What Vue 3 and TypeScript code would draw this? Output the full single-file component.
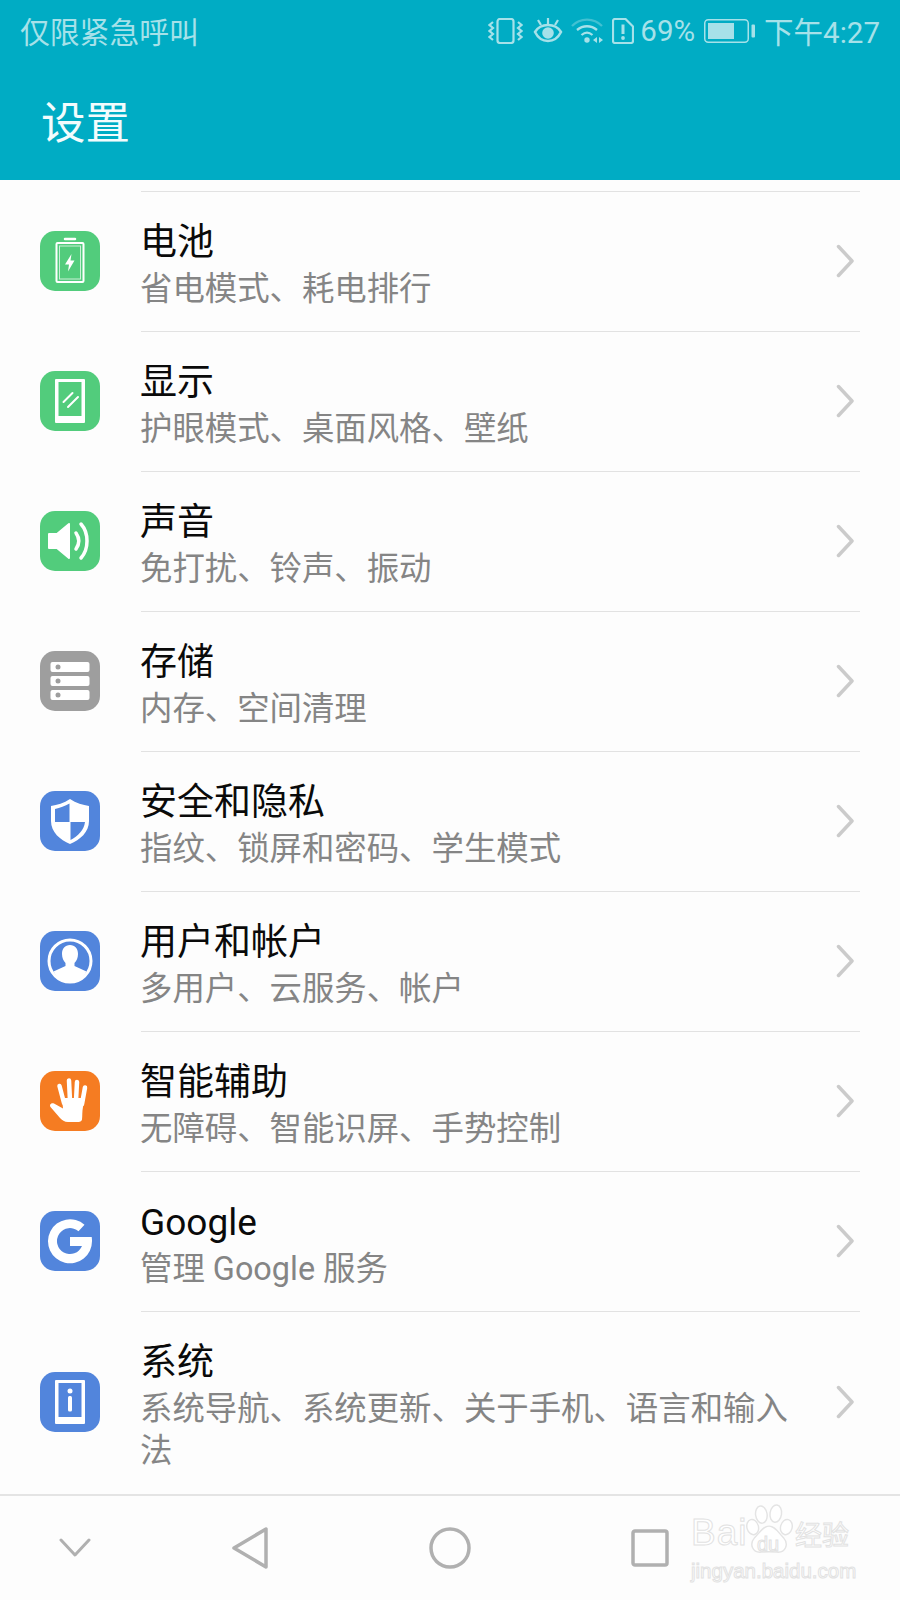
<script setup lang="ts">
type Row = { title: string; sub: string; icon: string; color: string }

const rows: Row[] = [
  { title: '电池', sub: '省电模式、耗电排行', icon: 'battery', color: '#52cc7c' },
  { title: '显示', sub: '护眼模式、桌面风格、壁纸', icon: 'display', color: '#52cc7c' },
  { title: '声音', sub: '免打扰、铃声、振动', icon: 'sound', color: '#52cc7c' },
  { title: '存储', sub: '内存、空间清理', icon: 'storage', color: '#9e9e9e' },
  { title: '安全和隐私', sub: '指纹、锁屏和密码、学生模式', icon: 'shield', color: '#5285dc' },
  { title: '用户和帐户', sub: '多用户、云服务、帐户', icon: 'user', color: '#5285dc' },
  { title: '智能辅助', sub: '无障碍、智能识屏、手势控制', icon: 'hand', color: '#f57c22' },
  { title: 'Google', sub: '管理 Google 服务', icon: 'google', color: '#5285dc' },
  { title: '系统', sub: '系统导航、系统更新、关于手机、语言和输入法', icon: 'info', color: '#5285dc' },
]
</script>

<template>
  <main class="phone">
    <header class="top">
      <div class="status">
        <span class="carrier">仅限紧急呼叫</span>
        <div class="status-right">
          <svg class="gap-10" width="35" height="26" viewBox="0 0 35 26" fill="none" stroke="currentColor" stroke-width="2.200">
            <rect x="9.500" y="1" width="16" height="24" rx="2.500" />
            <path d="M5 4L1.500 7 5 10 1.500 13 5 16 1.500 19 5 22M30 4l3.500 3L30 10l3.500 3L30 16l3.500 3L30 22" />
          </svg>
          <svg class="gap-8" width="30" height="26" viewBox="0 0 30 26" fill="none" stroke="currentColor" stroke-width="2.500">
            <path d="M2 14c3-5 7.500-7 13-7s10 2 13 7c-3 6-7.500 9-13 9S5 20 2 14z" />
            <circle cx="15" cy="15" r="5.800" fill="currentColor" stroke="none" />
            <path d="M5 2l3 5M15 0v6M25 2l-3 5" stroke-width="2.200" />
          </svg>
          <svg class="gap-8" width="33" height="26" viewBox="0 0 33 26" fill="none" stroke="currentColor" stroke-width="2.300">
            <path d="M1 8c8-8.500 22-8.500 30 0" opacity="0.4" />
            <path d="M6 12c6-5 14-5 20 0M10.500 17c3.500-3 7.500-3 11 0" />
            <circle cx="16" cy="22" r="2.700" fill="currentColor" stroke="none" />
            <path d="M22 22l4-3v6zM28 19l4 3-4 3z" fill="currentColor" stroke="none" />
          </svg>
          <svg class="gap-6" width="22" height="26" viewBox="0 0 22 26" fill="none" stroke="currentColor" stroke-width="2.200">
            <path d="M3 1h10.500L21 8.500V23a2 2 0 0 1-2 2H3a2 2 0 0 1-2-2V3a2 2 0 0 1 2-2z" />
            <path d="M11 6.500v9.500" stroke-width="3" />
            <circle cx="11" cy="20" r="1.900" fill="currentColor" stroke="none" />
          </svg>
          <span class="pct">69%</span>
          <svg class="gap-9" width="51" height="24" viewBox="0 0 51 24" fill="none">
            <rect x="0.750" y="0.750" width="43.500" height="22.500" rx="3.500" stroke="currentColor" stroke-width="1.500" />
            <rect x="4" y="4" width="26" height="16" fill="currentColor" />
            <rect x="47.500" y="5.500" width="3.500" height="13" rx="1" fill="currentColor" />
          </svg>
          <span class="time">下午4:27</span>
        </div>
      </div>
      <h1 class="page-title">设置</h1>
    </header>

    <section class="list">
      <div class="top-rule"></div>
      <div v-for="row in rows" :key="row.title" class="row">
        <div class="icon" :style="{ background: row.color }">
          <svg width="60" height="60" viewBox="0 0 60 60">
            <g v-if="row.icon === 'battery'" fill="none" stroke="#fff">
              <path d="M25 8h10" stroke-width="2.500" stroke-linecap="round" />
              <rect x="16.500" y="12" width="27" height="39" rx="1" stroke-width="2" />
              <rect x="19.500" y="15" width="21" height="33" stroke-width="1" opacity="0.7" />
              <path d="M31.500 23l-6.500 10.500h4l-1 7 6.500-11h-4z" fill="#fff" stroke="none" />
            </g>
            <g v-else-if="row.icon === 'display'">
              <path fill-rule="evenodd" d="M16 8h28a1 1 0 0 1 1 1v42a1 1 0 0 1-1 1H16a1 1 0 0 1-1-1V9a1 1 0 0 1 1-1zm2.500 3v34h23V11z" fill="#fff" />
              <path d="M23.500 31l9-9M28 36l10-10" stroke="#fff" stroke-width="2" stroke-linecap="round" />
            </g>
            <g v-else-if="row.icon === 'sound'" fill="none" stroke="#fff" stroke-linecap="round">
              <path d="M9 23h8l12-10v34l-12-10H9z" fill="#fff" stroke="#fff" stroke-width="2" stroke-linejoin="round" />
              <path d="M36 22c3.500 5 3.500 11 0 16" stroke-width="3.500" />
              <path d="M41 13c8 9 8 25 0 34" stroke-width="3.500" />
            </g>
            <g v-else-if="row.icon === 'storage'">
              <rect x="10.500" y="11" width="39" height="10" rx="2" fill="#fff" />
              <rect x="10.500" y="25" width="39" height="10" rx="2" fill="#fff" />
              <rect x="10.500" y="39" width="39" height="10" rx="2" fill="#fff" />
              <circle cx="18" cy="16" r="2.500" fill="#9e9e9e" />
              <circle cx="18" cy="30" r="2.500" fill="#9e9e9e" />
              <circle cx="18" cy="44" r="2.500" fill="#9e9e9e" />
            </g>
            <g v-else-if="row.icon === 'shield'">
              <path d="M30 8c6 4 13 6 19 7v15c0 11-9 19-19 23-10-4-19-12-19-23V15c6-1 13-3 19-7z" fill="#fff" />
              <path d="M29.500 12.500c-4.500 2.500-9.500 4.500-14.500 5.500v13h14.500zM30.500 31H45c-1 8-7 14-14.500 18z" fill="#5285dc" />
            </g>
            <g v-else-if="row.icon === 'user'">
              <circle cx="30" cy="30" r="21" fill="none" stroke="#fff" stroke-width="3" />
              <path d="M30 14c5 0 8 3.500 8 9 0 4-1.500 7-3.500 9v3l12 5.500C43 47 37 51 30 51s-13-4-16.500-10.500l12-5.500v-3c-2-2-3.500-5-3.500-9 0-5.500 3-9 8-9z" fill="#fff" />
            </g>
            <g v-else-if="row.icon === 'hand'">
              <path d="M19.500 15l4.500 17M29 9.500L30 30M37 11l-1 19M45 16.500L42 33" fill="none" stroke="#fff" stroke-width="4.500" stroke-linecap="round" />
              <path d="M22 27h22l-1 9c-1 5-.5 9-1 12.500-.3 1.500-1.500 2.500-3.500 2.500H28c-3.500 0-6-2-8-4l-9.500-11c-1.500-2.500 1-4.500 3.500-3.500l9 5z" fill="#fff" />
            </g>
            <g v-else-if="row.icon === 'google'">
              <path d="M44.500 13.700A22 22 0 1 0 52 30c0-1.400-.1-2.700-.3-4H30v9h12A13 13 0 1 1 38.500 20.300z" fill="#fff" />
            </g>
            <g v-else-if="row.icon === 'info'">
              <path fill-rule="evenodd" d="M16 8h28a1 1 0 0 1 1 1v42a1 1 0 0 1-1 1H16a1 1 0 0 1-1-1V9a1 1 0 0 1 1-1zm2.500 3v34h23V11z" fill="#fff" />
              <circle cx="30" cy="19" r="2.500" fill="#fff" />
              <rect x="28" y="24" width="4" height="15.500" rx="1.500" fill="#fff" />
            </g>
          </svg>
        </div>
        <div class="text">
          <div class="title">{{ row.title }}</div>
          <div class="sub">{{ row.sub }}</div>
        </div>
        <svg class="chev" width="18" height="34" viewBox="0 0 18 34" fill="none" stroke="#cbcbcb" stroke-width="3.500" stroke-linecap="round" stroke-linejoin="round">
          <path d="M2.500 2.500L16 17 2.500 31.500" />
        </svg>
      </div>
    </section>

    <nav class="nav">
      <svg width="32" height="20" viewBox="0 0 32 20" fill="none" stroke="#b0b0b0" stroke-width="3" stroke-linecap="round" stroke-linejoin="round">
        <path d="M2 2l14 15L30 2" />
      </svg>
      <svg width="36" height="42" viewBox="0 0 36 42" fill="none" stroke="#b0b0b0" stroke-width="3.500" stroke-linejoin="round">
        <path d="M34 2v38L2 21z" />
      </svg>
      <svg width="42" height="42" viewBox="0 0 42 42" fill="none" stroke="#b0b0b0" stroke-width="3.500">
        <circle cx="21" cy="21" r="19" />
      </svg>
      <svg width="38" height="38" viewBox="0 0 38 38" fill="none" stroke="#b0b0b0" stroke-width="3.500" stroke-linejoin="round">
        <rect x="2" y="2" width="34" height="34" rx="2" />
      </svg>
    </nav>

    <div class="mark">
      <div class="mark-top">
        <span class="bai">Bai</span>
        <div class="paw-box">
          <svg width="50" height="52" viewBox="0 0 52 54" fill="#fff" stroke="#e4e4e4" stroke-width="1.500">
            <ellipse cx="17" cy="12" rx="6" ry="9" transform="rotate(-8 17 12)" />
            <ellipse cx="32" cy="11" rx="6" ry="9" transform="rotate(8 32 11)" />
            <ellipse cx="8" cy="25" rx="6" ry="8" transform="rotate(-15 8 25)" />
            <ellipse cx="43" cy="25" rx="6" ry="8" transform="rotate(15 43 25)" />
            <path d="M25 24c6 0 9 6 15 12 6 7 2 16-7 15-5-.5-11-.5-16 0-9 1-13-8-7-15 6-6 9-12 15-12z" />
          </svg>
          <span class="du">du</span>
        </div>
        <span class="jy">经验</span>
      </div>
      <div class="mark-url">jingyan.baidu.com</div>
    </div>
  </main>
</template>

<style scoped>
.phone {
  position: relative;
  width: 900px;
  height: 1600px;
  display: flex;
  flex-direction: column;
  overflow: hidden;
  background: #fdfdfd;
  font-family: Roboto, 'Noto Sans CJK SC', sans-serif;
  color: #000;
}

.top {
  height: 180px;
  flex: none;
  background: #00acc4;
}

.status {
  height: 62px;
  padding: 0 20px;
  display: flex;
  align-items: center;
  justify-content: space-between;
  color: #a6e1e9;
  font-size: 29.800px;
}

.carrier { margin-bottom: 3px; }

.status-right {
  display: flex;
  align-items: center;
}

.gap-6 { margin-right: 6px; }
.gap-8 { margin-right: 8px; }
.gap-9 { margin-right: 9px; }
.gap-10 { margin-right: 10px; }
.pct { font-size: 29.500px; margin-right: 9px; }
.time { font-size: 29.500px; margin-bottom: 3px; }

.page-title {
  margin: 0;
  padding: 33px 0 0 41px;
  font-size: 44.500px;
  font-weight: 400;
  line-height: 58px;
  color: #f3fcfd;
}

.list {
  flex: 1;
  padding-top: 11px;
}

.top-rule {
  height: 1px;
  margin: 0 40px 0 141px;
  background: #e2e2e2;
}

.row {
  display: flex;
  align-items: center;
  padding: 0 47px 1px 40px;
  position: relative;
}

.row + .row::before {
  content: '';
  position: absolute;
  left: 141px;
  right: 40px;
  top: -1px;
  height: 1px;
  background: #e2e2e2;
}

.row + .row { margin-top: 1px; }

.icon {
  width: 60px;
  height: 60px;
  flex: none;
  border-radius: 15px;
  margin-right: 40px;
}

.icon svg { display: block; }

.text {
  flex: 1;
  min-width: 0;
  padding: 28px 40px 20px 0;
}

.title {
  font-size: 37px;
  line-height: 46px;
  color: #0a0a0a;
}

.sub {
  margin-top: 2px;
  font-size: 32.400px;
  line-height: 42px;
  color: #858585;
}

.chev {
  flex: none;
  transform: translateX(1px);
}

.nav {
  height: 106px;
  flex: none;
  border-top: 2px solid #e4e4e4;
  box-sizing: border-box;
  display: grid;
  grid-template-columns: 150px 200px 200px 200px;
  justify-items: center;
  align-items: center;
}

.mark {
  position: absolute;
  left: 691px;
  top: 1503px;
  width: 164px;
  color: #fff;
  -webkit-text-stroke: 1px #e2e2e2;
  font-family: 'Liberation Sans', 'Noto Sans CJK SC', sans-serif;
}

.mark-top {
  display: flex;
  align-items: flex-end;
  height: 52px;
  white-space: nowrap;
}

.bai {
  width: 54px;
  font-size: 37px;
  line-height: 44px;
  letter-spacing: 1px;
}

.paw-box {
  position: relative;
  width: 50px;
  height: 52px;
}

.paw-box svg { display: block; }

.du {
  position: absolute;
  left: 12px;
  top: 30px;
  font-size: 20px;
  line-height: 22px;
}

.jy {
  font-size: 27px;
  line-height: 38px;
}

.mark-url {
  margin-top: 4px;
  font-size: 20.500px;
  line-height: 24px;
  white-space: nowrap;
}
</style>
